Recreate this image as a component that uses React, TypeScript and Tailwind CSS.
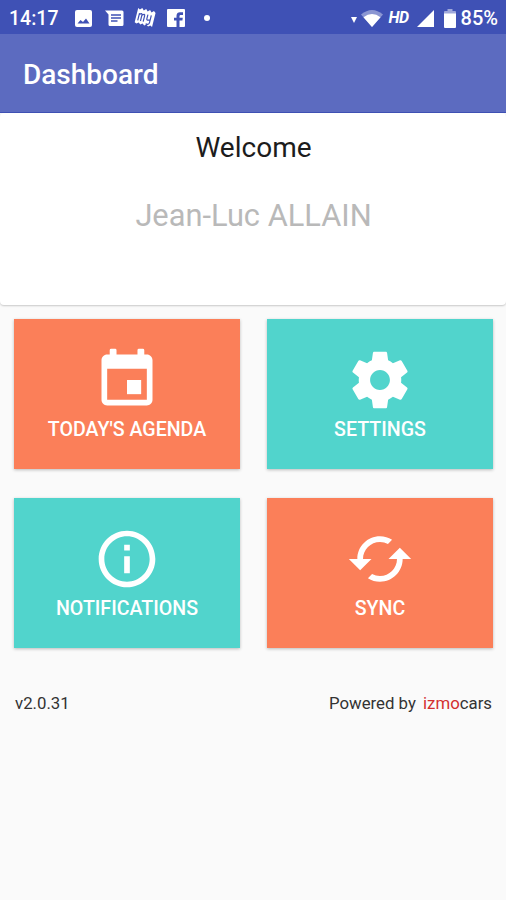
import type { ReactNode } from 'react'
import { MdCached, MdInfoOutline } from 'react-icons/md'

const AgendaIcon = () => (
  <svg viewBox="0 0 24 24" fill="currentColor" className="size-[68px]">
    <path d="M17 12h-5v5h5z" />
    <path d="M15.700 1.500q0-.500.500-.500h1.400q.500 0 .500.500V3h.900c1.100 0 2 .9 2 2v14c0 1.100-.9 2-2 2H5c-1.100 0-2-.9-2-2V5c0-1.100.9-2 2-2h.900V1.500q0-.500.500-.500h1.400q.500 0 .500.500V3h7.400zM19 19V8H5v11z" />
  </svg>
)

const SettingsIcon = () => (
  <svg viewBox="0 0 24 24" fill="currentColor" className="size-[68px]">
    <path d="M19.43 12.98c.04-.32.07-.64.07-.98s-.03-.66-.07-.98l2.11-1.65c.19-.15.24-.42.12-.64l-2-3.46c-.12-.22-.39-.3-.61-.22l-2.49 1c-.52-.4-1.08-.73-1.69-.98l-.38-2.65C14.46 2.18 14.25 2 14 2h-4c-.25 0-.46.18-.49.42l-.38 2.65c-.61.25-1.17.59-1.69.98l-2.49-1c-.23-.09-.49 0-.61.22l-2 3.46c-.13.22-.07.49.12.64l2.11 1.65c-.04.32-.07.65-.07.98s.03.66.07.98l-2.11 1.65c-.19.15-.24.42-.12.64l2 3.46c.12.22.39.3.61.22l2.49-1c.52.4 1.08.73 1.69.98l.38 2.65c.03.24.24.42.49.42h4c.25 0 .46-.18.49-.42l.38-2.65c.61-.25 1.17-.59 1.69-.98l2.49 1c.23.09.49 0 .61-.22l2-3.46c.12-.22.07-.49-.12-.64l-2.11-1.65zM12 15.5c-1.93 0-3.5-1.57-3.5-3.5s1.57-3.5 3.5-3.5 3.5 1.57 3.5 3.5-1.57 3.5-3.5 3.5z" />
  </svg>
)

const StatusBar = () => (
  <div className="flex h-[34px] items-center justify-between bg-[#3f51b5] pr-2 pl-[9px] text-white">
    <div className="flex items-center pt-0.5">
      <span className="w-[66px] pt-0.5 text-[19.5px] leading-6 font-medium">14:17</span>
      {/* Picture */}
      <svg viewBox="0 0 17 17" className="h-[17px] w-[17px]">
        <rect width="17" height="17" rx="2" fill="white" />
        <path d="M2.5 13.5l3-3.500 2.500 2 3-3.500 3.500 5z" fill="#3f51b5" />
      </svg>
      {/* Messages */}
      <svg viewBox="0 0 19 17" className="ml-[13px] h-[17px] w-[19px]">
        <path
          d="M0 .500h17a1.500 1.500 0 0 1 1.500 1.500v12.500a1.500 1.500 0 0 1-1.500 1.500H5a1.500 1.500 0 0 1-1.500-1.500V4.500z"
          fill="white"
        />
        <path d="M6 5h10M6 8h10M6 11h6.500" stroke="#3f51b5" strokeWidth="1.400" />
      </svg>
      {/* Tilted badge */}
      <svg viewBox="0 0 22 20" className="ml-2.5 h-5 w-[22px]">
        <g transform="rotate(14 11 10)">
          <path
            d="M2 2l2 1 2-2 2 2 2-2 2 2 2-2 2 2 2-2 2 1.500v14.500l-2-1-2 1.500-2-1.500-2 1.500-2-1.500-2 1.500-2-1.500-2 1.500-2-1z"
            fill="white"
          />
          <path
            d="M4.500 14V6.500M4.500 8q2.800-2.800 2.800 0V14M7.300 8q2.800-2.800 2.800 0V14M13 6v4.500q0 2 3.500 0M16.500 6v7.500q0 2.500-3.500 2"
            stroke="#3f51b5"
            strokeWidth="1.200"
            fill="none"
          />
        </g>
      </svg>
      {/* Facebook */}
      <svg viewBox="0 0 18 18" className="ml-[11px] h-[18px] w-[18px]">
        <rect width="18" height="18" rx="1" fill="white" />
        <path
          d="M9.500 18v-6.500H7V8.700h2.500V6.800C9.500 4.400 11 3.300 13 3.300h3V6h-2c-1 0-1.500.400-1.500 1.300v1.400h3.300l-.400 2.800h-2.900V18z"
          fill="#3f51b5"
        />
      </svg>
      <span className="ml-[19px] size-1.5 rounded-full bg-white" />
    </div>
    <div className="flex items-center pt-0.5">
      <svg viewBox="0 0 6 6" className="mt-1 mr-1 h-1.5 w-1.5">
        <path d="M0 0h6L3 6z" fill="white" />
      </svg>
      {/* Wifi */}
      <svg viewBox="0 0 22 17" className="h-[17px] w-[22px]">
        <path d="M0 4.500Q11-4.500 22 4.500L11 17z" fill="white" opacity="0.400" />
        <path d="M2.500 7.300Q11 .500 19.500 7.300L11 17z" fill="white" />
      </svg>
      <span className="ml-1.5 w-7 text-[16px] leading-6 font-bold tracking-[-0.5px] italic">HD</span>
      {/* Signal */}
      <svg viewBox="0 0 17 17" className="h-[17px] w-[17px]">
        <path d="M17 0v17H0z" fill="white" />
      </svg>
      {/* Battery */}
      <svg viewBox="0 0 12 19" className="ml-2.5 h-[19px] w-3">
        <path d="M3.500 0h5v2H11q1 0 1 1v2H0V3q0-1 1-1h2.500z" fill="white" opacity="0.500" />
        <path d="M0 4.500h12V18q0 1-1 1H1q-1 0-1-1z" fill="white" />
      </svg>
      <span className="ml-[5px] text-[20px] leading-6 font-medium">85%</span>
    </div>
  </div>
)

type TileProps = {
  label: string
  color: string
  icon: ReactNode
}

const Tile = ({ label, color, icon }: TileProps) => (
  <button
    className={`flex h-[150px] flex-col items-center pt-[27px] text-white shadow-[0_1px_3px_rgba(0,0,0,0.25)] ${color}`}
  >
    {icon}
    <span className="mt-1 text-[19.6px] leading-6 font-medium">{label}</span>
  </button>
)

const CORAL = 'bg-[#fb7f59]'
const TEAL = 'bg-[#51d4cc]'

export default function App() {
  return (
    <div className="min-h-[900px] w-[506px] bg-[#fafafa] font-['Roboto',sans-serif]">
      <StatusBar />
      <header className="flex h-[79px] items-center border-b border-[#3f51b5] bg-[#5c6bc0] pt-1 pl-[23px]">
        <h1 className="text-[28px] leading-8 font-medium text-white">Dashboard</h1>
      </header>

      <section className="flex h-48 flex-col items-center rounded-[4px] bg-white pt-[17px] shadow-[0_1px_2px_rgba(0,0,0,0.2)]">
        <p className="ml-px text-[28px] leading-9 text-[#1c1c1c]">Welcome</p>
        <p className="mt-8 ml-px text-[30.8px] leading-9 text-[#b9b9b9]">Jean-Luc ALLAIN</p>
      </section>

      <main className="grid grid-cols-2 gap-x-[27px] gap-y-[29px] pt-3.5 pr-[13px] pl-3.5">
        <Tile label="TODAY'S AGENDA" color={CORAL} icon={<AgendaIcon />} />
        <Tile label="SETTINGS" color={TEAL} icon={<SettingsIcon />} />
        <Tile label="NOTIFICATIONS" color={TEAL} icon={<MdInfoOutline className="size-[68px]" />} />
        <Tile label="SYNC" color={CORAL} icon={<MdCached className="size-[68px]" />} />
      </main>

      <footer className="mt-[43px] flex justify-between pr-3.5 pl-[15px] text-[16.8px] leading-6 text-[#333]">
        <span>v2.0.31</span>
        <span>
          Powered by <span className="ml-[3px] text-[#d32f2f]">izmo</span>cars
        </span>
      </footer>
    </div>
  )
}
